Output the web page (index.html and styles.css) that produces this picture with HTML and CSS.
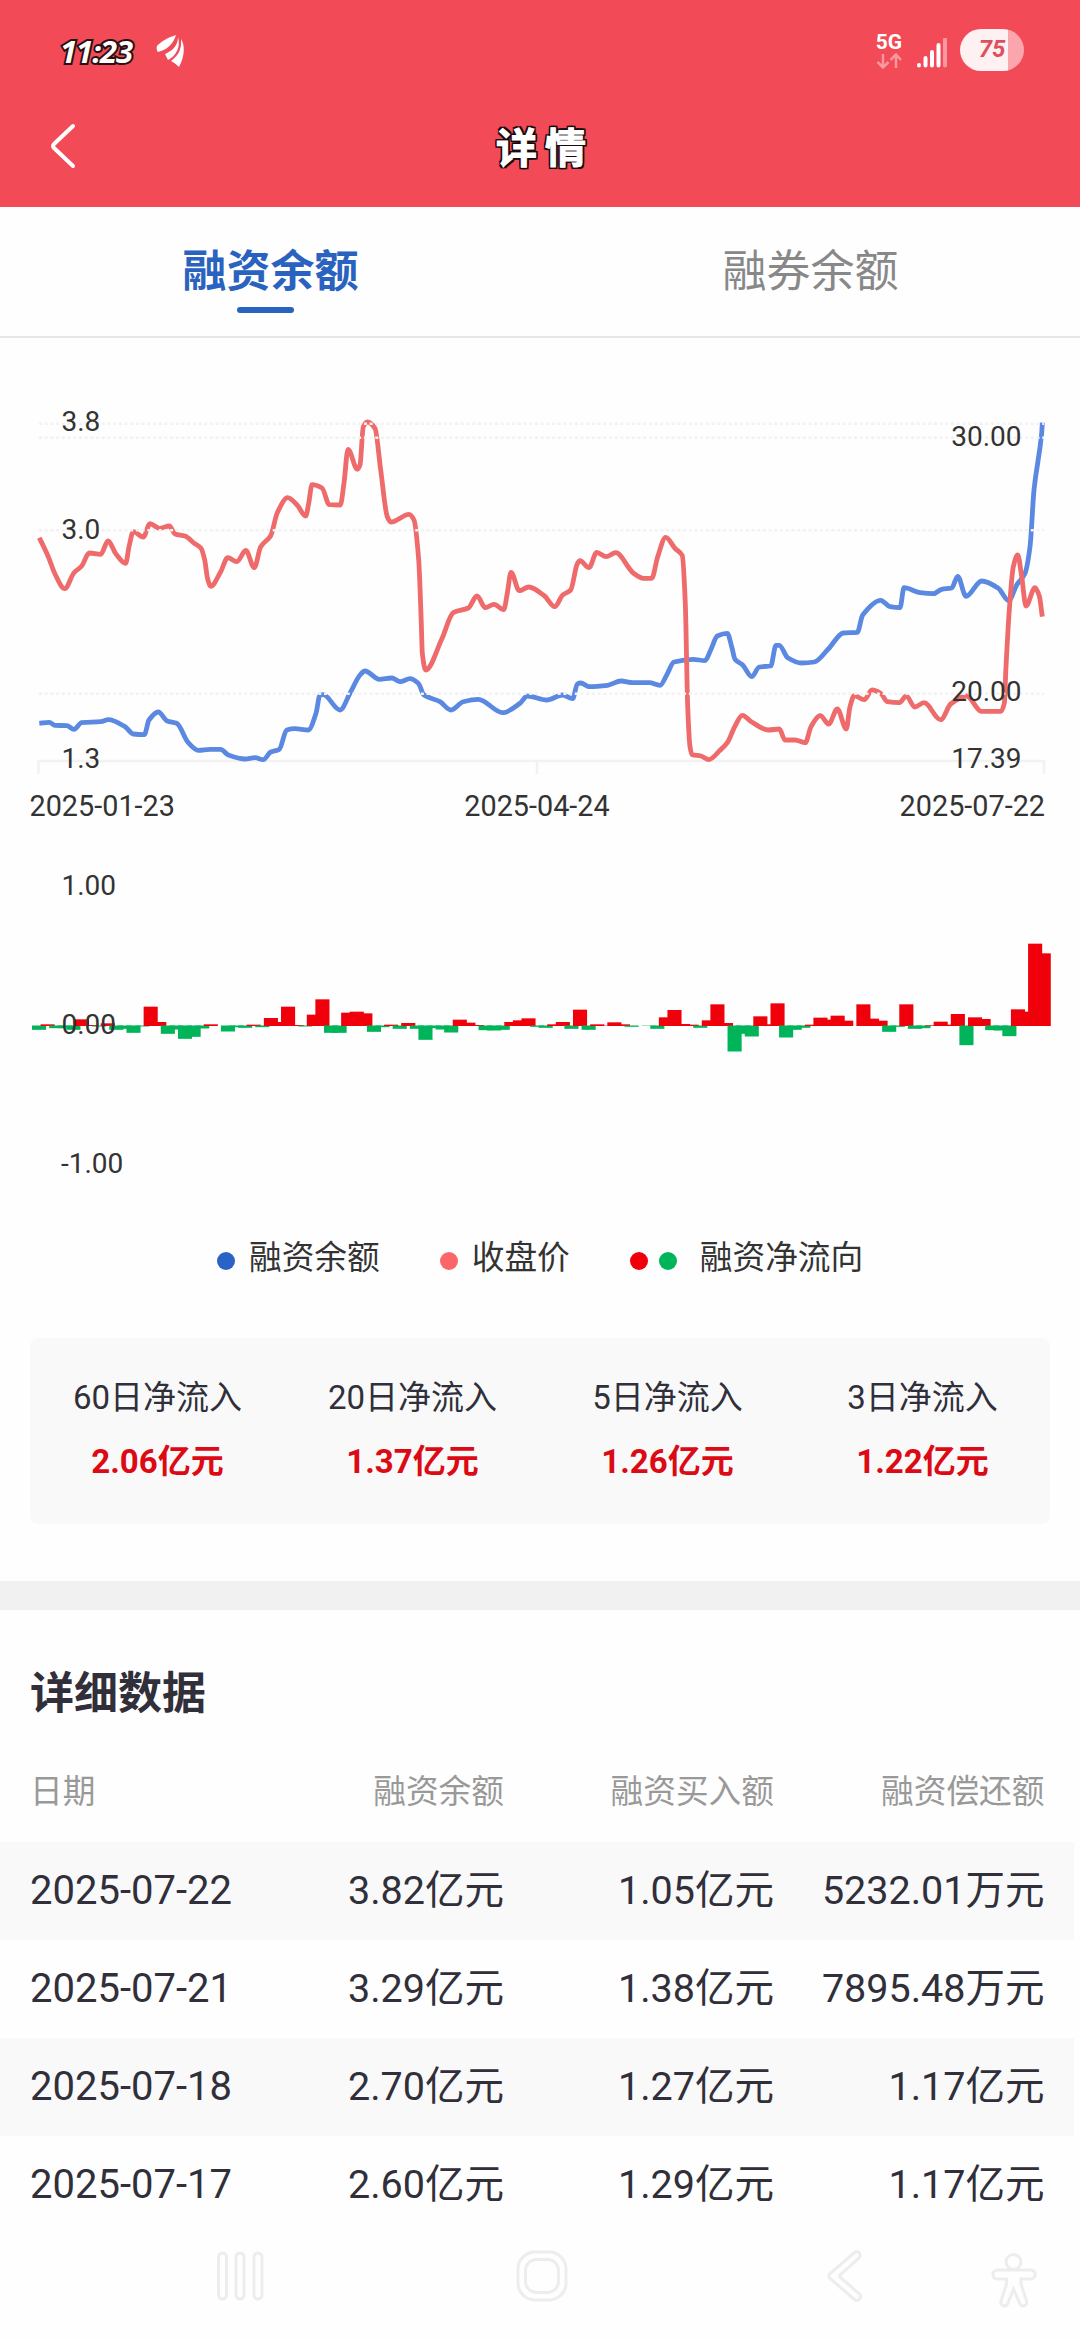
FILE: index.html
```html
<!DOCTYPE html>
<html lang="zh-CN">
<head>
    <meta charset="UTF-8">
    <meta name="viewport" content="width=device-width, initial-scale=1.0">
    <title>详情</title>
    <link rel="stylesheet" href="styles.css">
</head>
<body>
    <header class="header">
        <div class="status-bar">
            <div class="status-left">
                <span class="time">11:23</span>
                <svg class="feather" width="30" height="34" viewBox="0 0 30 34">
                    <path d="M20 1 C13 3 4 8 1 12 C0 14 1 17 2 18 C10 16 17 11 20 1Z"/>
                    <path d="M22 3 C22 12 16 17 9 20 L12 26 C20 22 25 13 22 3Z"/>
                    <path d="M25 5 C29 11 29 22 23 33 C20 30 17 28 15 27 C22 22 26 15 25 5Z"/>
                </svg>
            </div>
            <div class="status-right">
                <div class="network">
                    <span>5G</span>
                    <svg width="26" height="16" viewBox="0 0 26 16">
                        <path d="M7 1V14M1.500 9L7 14.500L12.500 9M20 15V2M14.500 7L20 1.500L25 7"/>
                    </svg>
                </div>
                <svg class="signal" width="30" height="30" viewBox="0 0 30 30">
                    <path d="M2 27V27.500M8.500 20V27.500M15 14V27.500M21.500 7V27.500"/>
                    <path class="faded" d="M28 1.500V27.500"/>
                </svg>
                <div class="battery">75</div>
            </div>
        </div>
        <div class="nav">
            <svg class="back" width="30" height="48" viewBox="0 0 30 48">
                <path d="M25 4L6 22Q4 24 6 26L25 44"/>
            </svg>
            <h1>详情</h1>
        </div>
    </header>

    <div class="tabs">
        <div class="tab active">融资余额</div>
        <div class="tab">融券余额</div>
    </div>

    <section class="charts">
        <svg class="line-chart" width="1080" height="450" viewBox="0 0 1080 450">
            <path class="axis" d="M38.500 384V371H1044V384M537 371V384"/>
            <path id="balanceLine" class="line balance"/>
            <path id="priceLine" class="line price"/>
            <path class="grid" d="M39 33.700H1044M39 47.700H1044M39 140.300H1044M39 303.700H1044"/>
            <g class="label">
                <text x="61.500" y="41">3.8</text>
                <text x="61.500" y="148.500">3.0</text>
                <text x="61.500" y="378">1.3</text>
                <text x="1021.500" y="55.500" text-anchor="end">30.00</text>
                <text x="1021.500" y="310.500" text-anchor="end">20.00</text>
                <text x="1021.500" y="377.500" text-anchor="end">17.39</text>
            </g>
            <g class="label date">
                <text x="29.500" y="425.500">2025-01-23</text>
                <text x="537" y="425.500" text-anchor="middle">2025-04-24</text>
                <text x="1045" y="425.500" text-anchor="end">2025-07-22</text>
            </g>
        </svg>
        <svg class="bar-chart" width="1080" height="350" viewBox="0 0 1080 350">
            <g id="bars"></g>
            <g class="label">
                <text x="61.500" y="54.500">1.00</text>
                <text x="61.500" y="193.500">0.00</text>
                <text x="61" y="332.500">-1.00</text>
            </g>
        </svg>
    </section>

    <div class="legend">
        <div class="legend-item"><i class="dot blue"></i>融资余额</div>
        <div class="legend-item"><i class="dot pink"></i>收盘价</div>
        <div class="legend-item"><i class="dot red"></i><i class="dot green"></i>融资净流向</div>
    </div>

    <div class="summary">
        <div class="summary-item"><span>60日净流入</span><strong>2.06亿元</strong></div>
        <div class="summary-item"><span>20日净流入</span><strong>1.37亿元</strong></div>
        <div class="summary-item"><span>5日净流入</span><strong>1.26亿元</strong></div>
        <div class="summary-item"><span>3日净流入</span><strong>1.22亿元</strong></div>
    </div>

    <section class="detail">
        <h2>详细数据</h2>
        <div class="row head"><span>日期</span><span>融资余额</span><span>融资买入额</span><span>融资偿还额</span></div>
        <div class="row"><span>2025-07-22</span><span>3.82亿元</span><span>1.05亿元</span><span>5232.01万元</span></div>
        <div class="row"><span>2025-07-21</span><span>3.29亿元</span><span>1.38亿元</span><span>7895.48万元</span></div>
        <div class="row"><span>2025-07-18</span><span>2.70亿元</span><span>1.27亿元</span><span>1.17亿元</span></div>
        <div class="row"><span>2025-07-17</span><span>2.60亿元</span><span>1.29亿元</span><span>1.17亿元</span></div>
    </section>

    <footer class="system-nav">
        <svg width="1080" height="106" viewBox="0 0 1080 106">
            <rect x="218.500" y="19" width="8" height="46" rx="4"/>
            <rect x="236" y="19" width="8" height="46" rx="4"/>
            <rect x="254" y="19" width="8" height="46" rx="4"/>
            <rect x="518" y="18" width="48" height="48" rx="17"/>
            <rect x="525.500" y="25.500" width="33" height="33" rx="11"/>
            <path d="M854.500 18.500L830 39.500Q827.500 42 830 44.500L854.500 65.500C858 68 862 64 860 60.500L840.500 43.500Q838.500 42 840.500 40.500L859 24C862 20 858 16 854.500 18.500Z"/>
            <circle cx="1013.500" cy="28" r="7.500"/>
            <path d="M998 36H1030C1037 36 1037 45 1030 45H1021V50L1026.500 67C1028 72 1021.500 74 1019.500 69L1013.500 55L1008 69C1006 74 999.500 72 1001 67L1006.500 50V45H998C991 45 991 36 998 36Z"/>
        </svg>
    </footer>

    <script src="chart.js"></script>
</body>
</html>
```
FILE: styles.css
```css
* {
    box-sizing: border-box;
}
body {
    margin: 0;
    width: 1080px;
    height: 2340px;
    overflow: hidden;
    background-color: #fefefe;
    color: #302f3a;
    font-family: Roboto, "Noto Sans CJK SC", sans-serif;
}
.header {
    height: 207px;
    background-color: #f24a56;
    color: white;
}
.status-bar {
    display: flex;
    justify-content: space-between;
    height: 100px;
    padding: 1px 56px 0 60px;
}
.status-left,
.status-right {
    display: flex;
    align-items: center;
}
.time {
    width: 77px;
    font-family: "Open Sans", sans-serif;
    font-size: 31px;
    font-weight: bold;
    font-style: italic;
    line-height: 36px;
    letter-spacing: -1px;
    -webkit-text-stroke: 4px #2a1012;
    paint-order: stroke fill;
}
.feather {
    margin-left: 19px;
    fill: white;
}
.network {
    display: flex;
    flex-direction: column;
    align-items: center;
    width: 26px;
    margin-right: 15px;
    font-size: 21px;
    font-weight: bold;
    line-height: 21px;
}
.network svg {
    fill: none;
    stroke: #fa98a0;
    stroke-width: 2.5;
}
.signal {
    margin: 5px 13px 0 0;
    fill: none;
    stroke: white;
    stroke-width: 4;
    stroke-linecap: round;
}
.signal .faded {
    stroke: #fa98a0;
}
.battery {
    width: 64px;
    height: 42px;
    margin-bottom: 1px;
    border-radius: 21px;
    background: linear-gradient(to right, #fff0f1 48px, #fba6ad 48px);
    color: #df4f5b;
    font-size: 24px;
    font-weight: bold;
    font-style: italic;
    line-height: 40px;
    text-align: center;
}
.nav {
    display: grid;
    grid-template-columns: 100px 1fr 100px;
    align-items: center;
    height: 92px;
}
.back {
    margin-left: 48px;
    fill: none;
    stroke: white;
    stroke-width: 4;
    stroke-linecap: round;
}
.nav h1 {
    margin: 0;
    padding: 6px 0 0 10px;
    font-size: 41px;
    font-weight: bold;
    line-height: 60px;
    letter-spacing: 8px;
    text-align: center;
    -webkit-text-stroke: 1px white;
    text-shadow: 2px 0 #1c0a0b, -2px 0 #1c0a0b, 0 2px #1c0a0b, 0 -2px #1c0a0b,
        2px 2px #1c0a0b, -2px 2px #1c0a0b, 2px -2px #1c0a0b, -2px -2px #1c0a0b;
}
.tabs {
    display: flex;
    height: 131px;
    border-bottom: 2px solid #e6e6e6;
}
.tab {
    display: flex;
    flex: 1;
    flex-direction: column;
    align-items: center;
    padding: 33px 0 0 1px;
    color: #888;
    font-size: 44px;
    line-height: 64px;
}
.tab.active {
    color: #2a62c0;
    font-weight: bold;
}
.tab.active::after {
    content: "";
    width: 57px;
    height: 6px;
    margin: 3px 10px 0 0;
    border-radius: 3px;
    background-color: #2a62c0;
}
.charts {
    padding-top: 52px;
}
.charts svg {
    display: block;
}
.label {
    fill: #333;
    font-size: 28px;
}
.label.date {
    font-size: 28.8px;
}
.axis {
    fill: none;
    stroke: #f2f2f2;
    stroke-width: 2.5;
}
.grid {
    stroke: #f2f2f2;
    stroke-width: 2.5;
    stroke-dasharray: 3 2.7;
}
.line {
    fill: none;
    stroke-width: 4.8;
    stroke-linejoin: round;
}
.balance {
    stroke: #5b88e0;
}
.price {
    stroke: #ee6a6b;
}
.legend {
    display: flex;
    height: 110px;
    padding: 44px 0 0 217px;
    color: #333;
    font-size: 32.7px;
    line-height: 48px;
}
.legend-item {
    display: flex;
    align-items: center;
    height: 48px;
    margin-right: 60px;
}
.dot {
    width: 18px;
    height: 18px;
    margin: 6px 14px 0 0;
    border-radius: 50%;
}
.blue {
    background-color: #2a62c6;
}
.pink {
    background-color: #fb6668;
}
.red {
    margin-right: 11px;
    background-color: #f0000a;
}
.green {
    margin-right: 23px;
    background-color: #00b45a;
}
.summary {
    display: grid;
    grid-template-columns: repeat(4, 1fr);
    height: 186px;
    margin: 38px 30px 0;
    padding-top: 36px;
    border-radius: 8px;
    background-color: #f9f9f9;
}
.summary-item {
    display: flex;
    flex-direction: column;
    align-items: center;
    gap: 16px;
    font-size: 33px;
    line-height: 48px;
}
.summary-item strong {
    color: #dc0a14;
}
.detail {
    margin-top: 57px;
    border-top: 29px solid #f1f1f1;
}
.detail h2 {
    margin: 0;
    padding: 52px 30px 33px;
    font-size: 44px;
    line-height: 64px;
}
.row {
    display: grid;
    grid-template-columns: 220px 254px 270px 270.5px;
    align-items: center;
    width: 1074px;
    height: 98px;
    padding-left: 30px;
    font-size: 39.5px;
    line-height: 58px;
}
.row span:first-child {
    font-size: 40px;
}
.row span + span {
    text-align: right;
}
.row:nth-child(odd) {
    background-color: #f9f9fa;
}
.row.head,
.row.head span {
    font-size: 32.7px;
}
.row.head {
    height: 83px;
    padding-bottom: 17px;
    color: #999;
    background: none;
}
.system-nav svg {
    display: block;
    fill: none;
    stroke: #ededed;
    stroke-width: 3;
}
```
FILE: chart.js
```js
const price = [
    [39.3,147.7],[48.3,166.7],[55,184],[64.7,198.7],[74,182.7],[81.7,176],[89.3,163],[100.7,164.3],
    [108,151],[116,164],[125.7,173.3],[129,156.7],[133.3,141.7],[143.3,147],[150,133.7],[159.3,138.3],
    [169.3,136],[175,144],[185,146],[194.3,153.3],[201,158.3],[204.7,170],[207.5,188.3],[210.7,196.3],
    [220.7,181.7],[227.7,167.7],[237,171.7],[245.7,160.3],[254.3,177.7],[260.7,156.7],[270.7,145.7],
    [277.3,122.7],[287.7,107.7],[297.3,115.3],[305.7,126],[308.7,113.3],[312,94.7],[322,98],[329.3,114.7],
    [340.3,115],[344,93],[348,59.3],[357.3,79.3],[360,75],[363.3,36.7],[367.3,32],[375,38.3],[380.7,80],
    [387.3,126.7],[391,132],[409,124.3],[414,130],[418.7,170],[421.3,233.3],[422.3,263.3],[425.7,280],
    [441.7,249.3],[453.3,222.7],[468.3,218],[477,206],[485.3,217.7],[494,214.3],[503.7,219.7],
    [507.3,203.3],[511,182.3],[519.3,200.7],[528.7,197],[544.3,205.7],[554.7,216.7],[562.7,205],
    [570.7,200],[577.3,173.7],[580,170.7],[589,177.7],[596.7,162.3],[606,166.7],[615.7,162.7],[633.3,183],
    [643.3,188.3],[651.7,188.3],[657.7,166.7],[665.7,147.3],[675,158.3],[682.3,165.7],[685.3,213.3],
    [687.7,316.7],[690,356.7],[692,364.7],[701,366],[708.7,369.7],[720,360.3],[727.3,352.7],[734.7,336.7],
    [742.3,325.3],[751.7,332],[768.3,340],[779.3,339],[785,350],[795,350],[805.3,352.7],[811,336.7],
    [820.3,325.7],[828.7,334],[837.3,319],[846.3,339],[850,316.7],[854.3,305.7],[864.3,309.7],[872,300],
    [880.7,303.3],[887.3,311.7],[899.3,312.7],[906.3,306],[914.7,317],[924,312.7],[940.7,329.7],
    [950.7,314],[966.7,306],[981.3,321.3],[1001,321.3],[1004.3,313.3],[1006,276.7],[1009.3,220],
    [1013.3,176.7],[1017.7,165],[1021.7,186.7],[1026,216],[1035,197.7],[1039.3,206],[1042.3,226.7]
];
const balance = [
    [39.3,333.3],[49.3,332.3],[55,335.3],[66.7,335.7],[74,339.3],[81.7,332.7],[100.7,331.7],[108.3,329.7],
    [125,336.7],[133.3,344],[144.3,344.7],[149,330],[158.3,322],[167.3,331],[176.7,333.3],[188.3,352.7],
    [198.3,360.3],[210,359.3],[220.7,359.3],[228.3,365],[245,369],[255,367.7],[263.3,369.7],[270.7,362],
    [279.3,359.3],[286.7,340],[295,338.7],[308.3,340],[316,323.3],[320,305],[323.3,304.7],[340,320],
    [350,303.3],[360,285],[365,281],[379.3,289.3],[391.7,288],[400,291.7],[410,288.7],[418.3,293.3],
    [424,305],[440,311.7],[451,320],[463.3,311.7],[478.3,309.3],[502.7,322.7],[520,313.3],[527.3,306],
    [546.7,310],[562.7,305],[572.7,308.7],[577.3,294],[580.7,293],[589,296.7],[607.7,295.3],[621,291],
    [632.7,292.7],[649.3,292.7],[660,295.3],[666.7,285],[674,272],[693.3,269.3],[705,270.7],[710.7,260],
    [717.3,246],[727.3,243.3],[731.7,256.7],[735,269.3],[742.7,275],[751.7,286.7],[759.3,277],[770.7,276],
    [776,255.3],[779.3,255.3],[787.7,267.7],[801.7,273],[814.3,272],[828.3,259],[843.3,243],[857.3,242.3],
    [862.7,225],[880.7,210.3],[890,216.7],[900,217.7],[904,197.7],[920,202.7],[933.3,203.7],[941.7,199.3],
    [951.7,198],[957.7,186.3],[966,206.3],[981.7,191],[998.3,198.3],[1008.7,210.7],[1016.7,195],
    [1025,183.3],[1030,156.7],[1034,100],[1041.7,43],[1042.3,32.7]
];
// 每日净流向，单位：1/3 像素
const flow = [
    -13,5,-8,-8,-13,20,3,-3,8,-13,-10,-22,-3,58,12,-25,-12,-40,-34,-9,5,0,-18,-5,-7,4,-5,24,12,58,
    3,-3,34,80,-22,-22,40,43,38,-19,-5,4,-10,9,-10,-43,-8,-12,-21,19,10,3,-14,-15,-13,12,17,23,-4,-7,
    5,12,-10,49,-13,5,1,11,5,-4,0,-1,-10,26,48,6,4,-7,17,65,9,-78,-25,-33,29,5,68,-36,-13,-7,
    4,25,19,31,16,0,65,22,16,-19,-4,65,-10,-8,2,13,4,36,-59,26,21,-14,-15,-32,50,43,247,218
];

// 单调三次插值，避免曲线过冲
function smoothPath(pts) {
    const n = pts.length;
    const slope = [];
    for (let i = 0; i < n - 1; i++) {
        slope.push((pts[i + 1][1] - pts[i][1]) / (pts[i + 1][0] - pts[i][0]));
    }
    const m = [slope[0]];
    for (let i = 1; i < n - 1; i++) {
        const a = slope[i - 1], b = slope[i];
        m.push(a * b <= 0 ? 0 : 2 * a * b / (a + b));
    }
    m.push(slope[n - 2]);
    let d = 'M' + pts[0];
    for (let i = 0; i < n - 1; i++) {
        const [x0, y0] = pts[i], [x1, y1] = pts[i + 1];
        const h = (x1 - x0) / 3;
        d += `C${x0 + h},${y0 + m[i] * h} ${x1 - h},${y1 - m[i + 1] * h} ${x1},${y1}`;
    }
    return d;
}

document.getElementById('priceLine').setAttribute('d', smoothPath(price));
document.getElementById('balanceLine').setAttribute('d', smoothPath(balance));

document.getElementById('bars').innerHTML = flow.map((v, i) => {
    const h = Math.abs(v) / 3;
    const y = v > 0 ? 186 - h : 185.5;
    return `<rect x="${32 + i * 8.587}" y="${y}" width="14.1" height="${h}" fill="${v > 0 ? '#f0000a' : '#00b45a'}"/>`;
}).join('');
```
